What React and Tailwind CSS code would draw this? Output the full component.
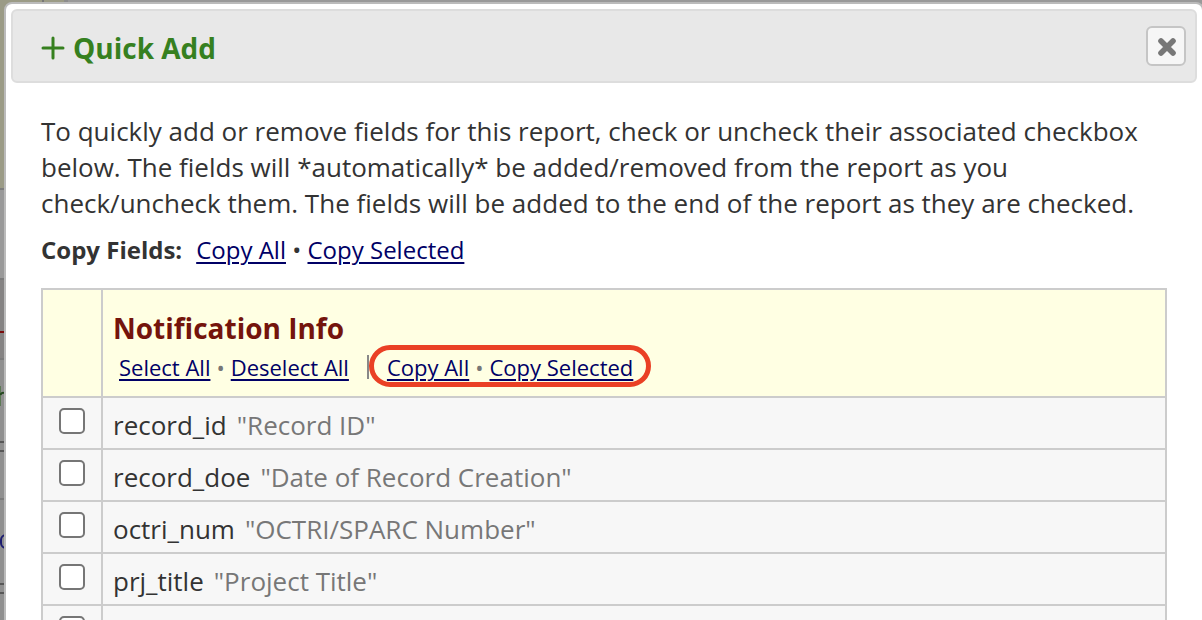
import React, { useState } from "react";

const fields = [
  { name: "record_id", label: "Record ID" },
  { name: "record_doe", label: "Date of Record Creation" },
  { name: "octri_num", label: "OCTRI/SPARC Number" },
  { name: "prj_title", label: "Project Title" },
  { name: "", label: "" },
];

const Link = ({ children }) => (
  <a
    href="#"
    className="text-[#000066] underline decoration-2 underline-offset-3"
  >
    {children}
  </a>
);

// dimmed page that shows around the dialog
const Backdrop = () => (
  <div
    aria-hidden="true"
    className="absolute inset-0 z-0 overflow-hidden bg-[#8f8f8f]"
  >
    <div className="flex h-[188px] bg-[#999999]">
      <div className="w-[42px] bg-[#9b9b86]"></div>
      <div className="w-[2px] bg-[#777777]"></div>
      <div className="w-[20px] bg-[#9b9b86]"></div>
      <div className="w-[4px] bg-[#8c8c8c]"></div>
    </div>
    <div className="h-[90px] border-t-2 border-[#7d7d7d] bg-[#999999]"></div>
    <div className="h-[53px] border-t-2 border-[#7b7b7b] bg-[#858383]"></div>
    <div className="h-[27px] border-t-2 border-[#7a0c0c] bg-[#858383]"></div>
    <div className="h-[83px] border-t-2 border-[#7b7b7b] bg-[#8f8f8f] pt-[26px]">
      <svg width="4" height="20" viewBox="0 0 4 20" fill="none">
        <path d="M0.5 0V20" stroke="#5c7a55" />
        <path d="M0.5 9C1 7 2.5 6.5 4 7" stroke="#24481e" strokeWidth="2" />
      </svg>
    </div>
    <div className="h-[11px] border-y-2 border-[#575757]"></div>
    <div className="h-[48px] border-b-2 border-[#7b7b7b]"></div>
    <div className="flex h-[83px] items-center">
      <div className="h-[15px] w-[12px] rounded-full border-2 border-[#1c1c70]"></div>
    </div>
    <div className="h-[11px] border-y-2 border-[#575757]"></div>
  </div>
);

const DialogHeader = () => (
  <div className="flex h-[74px] items-center justify-between rounded-md border-2 border-[#dddddd] bg-[#e8e8e8] pt-1 pr-[9px] pl-[28px]">
    <h1 className="flex items-center gap-2 text-[28px] font-bold text-[#36801f]">
      <svg width="24" height="24" viewBox="0 0 24 24" fill="none">
        <path
          d="M12 2V22M2 12H22"
          stroke="currentColor"
          strokeWidth="3"
          strokeLinecap="round"
        />
      </svg>
      Quick Add
    </h1>
    <button
      type="button"
      aria-label="Close"
      className="mb-1 flex size-10 items-center justify-center rounded-md border-2 border-[#c5c5c5] bg-[#f6f6f6] pt-[2px] pl-[2px]"
    >
      <svg width="20" height="20" viewBox="0 0 20 20" fill="none">
        <path
          d="M4 4L16 16M16 4L4 16"
          stroke="#777777"
          strokeWidth="5.6"
          strokeLinecap="round"
        />
      </svg>
    </button>
  </div>
);

const FieldRow = ({ name, label }) => {
  const [checked, setChecked] = useState(false);

  return (
    <tr className="h-[52px] bg-[#f7f7f7]">
      <td className="border-2 border-[#cccccc] p-0">
        <input
          type="checkbox"
          id={`field-${name}`}
          aria-label={name || "field"}
          checked={checked}
          onChange={(e) => setChecked(e.target.checked)}
          className="mx-auto mb-1 block size-[26px] appearance-none rounded-[5px] border-2 border-[#767676] bg-white checked:bg-[#0075ff]"
        />
      </td>
      <td className="border-2 border-[#cccccc] py-0 pr-3 pl-[10px]">
        {name && (
          <label
            htmlFor={`field-${name}`}
            className="flex gap-[10px] pt-1 text-[26px] leading-[36px]"
          >
            {name}
            <span className="text-[#777777]">"{label}"</span>
          </label>
        )}
      </td>
    </tr>
  );
};

const App = () => {
  return (
    <div className="relative h-screen overflow-hidden font-['Open_Sans','Noto_Sans',sans-serif] text-[#333333]">
      <Backdrop />
      <div
        role="dialog"
        aria-label="Quick Add"
        className="relative z-10 mt-[2px] -mr-[2px] ml-1 min-h-full rounded-lg border-2 border-[#bbbbbb] bg-white p-[5px]"
      >
        <DialogHeader />
        <div className="pt-[30px] pr-[30px] pl-[30px]">
          <p className="text-[26px] leading-[36px]">
            To quickly add or remove fields for this report, check or uncheck
            their associated checkbox below. The fields will *automatically* be
            added/removed from the report as you check/uncheck them. The fields
            will be added to the end of the report as they are checked.
          </p>
          <div className="mt-[11px] flex gap-[14px] text-[24px] leading-[36px]">
            <b>Copy Fields:</b>
            <div>
              <Link>Copy All</Link> • <Link>Copy Selected</Link>
            </div>
          </div>
          <table className="mt-[20px] w-full table-fixed border-collapse">
            <colgroup>
              <col className="w-[60px]" />
              <col />
            </colgroup>
            <thead>
              <tr className="h-[108px] bg-[#ffffe3]">
                <td className="border-2 border-[#cccccc]"></td>
                <th className="border-2 border-[#cccccc] pt-2 pr-3 pb-0 pl-[10px] text-left font-normal">
                  <h2 className="text-[28px] leading-[40px] font-bold text-[#74140c]">
                    Notification Info
                  </h2>
                  <div className="flex items-center pl-[6px] text-[22px] leading-[38px] text-[#777777]">
                    <div className="flex gap-[6px]">
                      <Link>Select All</Link>•<Link>Deselect All</Link>
                    </div>
                    <div className="ml-[18px] h-6 w-[2px] bg-[#888888]"></div>
                    <div className="relative ml-[18px] flex gap-[6px]">
                      <Link>Copy All</Link>•<Link>Copy Selected</Link>
                      <div className="pointer-events-none absolute -inset-x-[18px] -top-[3px] h-[42px] rounded-full border-5 border-[#ea4025]"></div>
                    </div>
                  </div>
                </th>
              </tr>
            </thead>
            <tbody>
              {fields.map((field, i) => (
                <FieldRow key={i} {...field} />
              ))}
            </tbody>
          </table>
        </div>
      </div>
    </div>
  );
};

export default App;
